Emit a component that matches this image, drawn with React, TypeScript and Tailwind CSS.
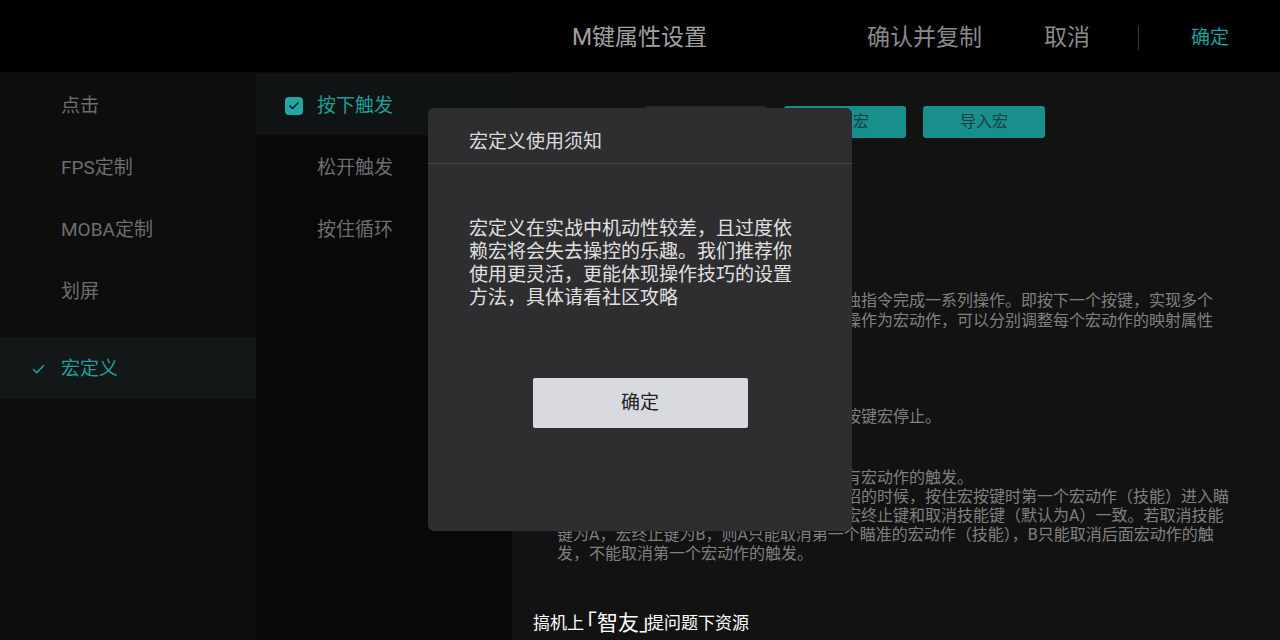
import { Check } from "lucide-react"

const modes = ["点击", "FPS定制", "MOBA定制", "划屏"]
const triggers = ["按下触发", "松开触发", "按住循环"]

function TopBar() {
  return (
    <div className="flex h-[72px] items-center bg-black pt-[4px]">
      <div className="w-[572px]" />
      <span className="text-[23px] text-[#a0a0a0]">M键属性设置</span>
      <span className="ml-[160px] text-[23px] text-[#8a8a8a]">确认并复制</span>
      <span className="ml-[62px] text-[23px] text-[#8a8a8a]">取消</span>
      <div className="ml-[48px] h-[24px] w-px bg-[#3a3a3a]" />
      <span className="ml-[52px] text-[19px] text-[#1fa19d]">确定</span>
    </div>
  )
}

function ModeColumn() {
  return (
    <div className="w-[256px] bg-[#0d0d0d] pt-px">
      {modes.map((m) => (
        <div key={m} className="flex h-[62px] items-center pl-[61px] pt-[4px] text-[19px] text-[#6e6e6e]">
          {m}
        </div>
      ))}
      {/* selected mode */}
      <div className="mt-[16px] flex h-[62px] items-center bg-[#131717] pl-[31px] pt-[3px] text-[19px] text-[#1e9e9a]">
        <Check className="mr-[15px] h-[15px] w-[15px]" strokeWidth={2.5} />
        宏定义
      </div>
    </div>
  )
}

function TriggerColumn() {
  return (
    <div className="w-[256px] bg-[#080808] pt-px">
      {triggers.map((t, i) => (
        <div
          key={t}
          className={
            i === 0
              ? "flex h-[62px] items-center bg-[#0f1313] pl-[29px] pt-[4px] text-[19px] text-[#1e9e9a]"
              : "flex h-[62px] items-center pl-[61px] pt-[4px] text-[19px] text-[#6e6e6e]"
          }
        >
          {i === 0 && (
            <span className="mr-[14px] flex h-[18px] w-[18px] items-center justify-center rounded-[4px] bg-[#1fa8a4]">
              <Check className="h-[12px] w-[12px] text-[#0b1a1a]" strokeWidth={3.5} />
            </span>
          )}
          {t}
        </div>
      ))}
    </div>
  )
}

function MainPanel() {
  return (
    <div className="flex-1 bg-[#121212] pl-[45px] pt-[34px]">
      <div className="flex gap-[17px] pl-[88px]">
        <div className="flex h-[32px] w-[122px] items-center justify-center rounded-[3px] bg-[#2b2b2b] text-[16px] text-[#555]">
          新建宏
        </div>
        <div className="flex h-[32px] w-[122px] items-center justify-center rounded-[3px] bg-[#178f8b] text-[16px] text-[#1d3d3b]">
          导出宏
        </div>
        <div className="flex h-[32px] w-[122px] items-center justify-center rounded-[3px] bg-[#178f8b] text-[16px] text-[#1d3d3b]">
          导入宏
        </div>
      </div>

      <div className="whitespace-nowrap text-[16px] text-[#808080]">
        <div className="mt-[124px] leading-[20px] text-[#9a9a9a]">宏定义说明</div>
        <div className="mt-[9px] leading-[20px]">宏定义功能可以将多个操作合并，通过单独指令完成一系列操作。即按下一个按键，实现多个</div>
        <div className="leading-[20px]">在宏编辑中，可以设置一个或多个按键的操作为宏动作，可以分别调整每个宏动作的映射属性</div>
        <div className="mt-[39px] leading-[20px] text-[#9a9a9a]">宏终止键</div>
        <div className="mt-[17px] leading-[20px]">宏终止键：宏执行过程中按下该键，可使按键宏停止。</div>
        <div className="mt-[11px] leading-[19px] text-[#9a9a9a]">取消技能键</div>
        <div className="mt-[11px] leading-[19px]">取消技能键：按下取消技能键可以取消所有宏动作的触发。</div>
        <div className="leading-[19px]">例如：当宏的第一个动作为需要瞄准的大招的时候，按住宏按键时第一个宏动作（技能）进入瞄</div>
        <div className="leading-[19px]">准状态。此时若要取消瞄准，则需要保证宏终止键和取消技能键（默认为A）一致。若取消技能</div>
        <div className="leading-[19px]">键为A，宏终止键为B，则A只能取消第一个瞄准的宏动作（技能），B只能取消后面宏动作的触</div>
        <div className="leading-[19px]">发，不能取消第一个宏动作的触发。</div>
      </div>
    </div>
  )
}

function NoticeDialog() {
  return (
    <div className="absolute left-[428px] top-[108px] flex h-[423px] w-[424px] flex-col rounded-[6px] bg-[#2e2e30]">
      <div className="flex h-[55px] items-center pl-[41px] pt-[14px] text-[19px] text-[#dcdcdc]">
        宏定义使用须知
      </div>
      <div className="h-px bg-[#47474a]" />
      <p className="mt-[53px] pl-[41px] text-[19px] leading-[23px] text-[#e0e0e0]">
        宏定义在实战中机动性较差，且过度依
        <br />
        赖宏将会失去操控的乐趣。我们推荐你
        <br />
        使用更灵活，更能体现操作技巧的设置
        <br />
        方法，具体请看社区攻略
      </p>
      <button className="mx-auto mt-[69px] h-[50px] w-[215px] rounded-[2px] bg-[#d8dae0] text-[19px] text-[#222]">
        确定
      </button>
    </div>
  )
}

export default function App() {
  return (
    <div className="relative h-[640px] w-[1280px] overflow-hidden bg-black font-[Roboto,'Noto_Sans_CJK_SC',sans-serif]">
      <TopBar />
      <div className="flex h-[568px]">
        <ModeColumn />
        <TriggerColumn />
        <MainPanel />
      </div>

      <NoticeDialog />

      {/* watermark */}
      <div className="absolute left-[533px] top-[608px] flex items-end whitespace-nowrap text-[17px] leading-[30px] text-white">
        <span>搞机上</span>
        <span className="ml-[-9px] text-[22px]">「</span>
        <span className="text-[21px]">智友</span>
        <span className="mr-[-14px] text-[22px]">」</span>
        <span>提问题下资源</span>
      </div>
    </div>
  )
}
